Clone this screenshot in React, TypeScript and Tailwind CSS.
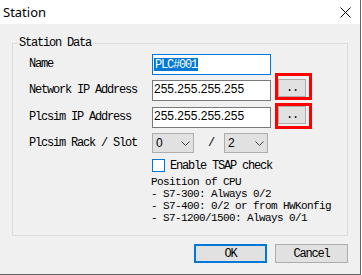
import React from "react";

const mono = "font-[family-name:'Liberation_Mono',monospace] text-[12px] tracking-[-1.2px] leading-[12px] text-black";
const monoSmall = "font-[family-name:'Liberation_Mono',monospace] text-[11px] tracking-[-0.6px] leading-[12px] text-black";
const sans = "font-[family-name:'Liberation_Sans',Arial,sans-serif] text-[12px] leading-[14px] text-black";

function Chevron() {
  return (
    <svg width="9" height="5" viewBox="0 0 9 5" className="shrink-0">
      <polyline points="0.5,0.5 4.5,4.5 8.5,0.5" fill="none" stroke="#444" strokeWidth="1" />
    </svg>
  );
}

function Combo({ value, w }: { value: string; w: string }) {
  return (
    <div className={`${w} h-[20px] bg-[#e1e1e1] border border-[#adadad] flex items-center justify-between pl-[3px] pr-[3px]`}>
      <span className={sans}>{value}</span>
      <Chevron />
    </div>
  );
}

export default function App() {
  return (
    <div className="w-[362px] h-[275px] bg-white">
      <div className="w-[361px] h-[275px] flex flex-col border-r border-b border-[#646464] bg-[#f0f0f0]">
        <div className="h-[24px] shrink-0 bg-white flex items-center justify-between pl-[3px] pr-[9px]">
          <span className="font-[family-name:'Noto_Sans',sans-serif] text-[13px] leading-[16px] text-black">Station</span>
          <svg width="11" height="11" viewBox="0 0 11 11">
            <path d="M0.5 0.5 L10.5 10.5 M10.5 0.5 L0.5 10.5" stroke="#000" strokeWidth="1" fill="none" />
          </svg>
        </div>
        <div className="flex-1 flex flex-col px-[12px] pt-[13px]">
          <fieldset className="h-[199px] border border-[#dcdcdc] p-0 m-0 min-w-0">
            <legend className={`${mono} ml-[5px] px-[1px]`}>Station Data</legend>
            <div className="flex flex-col pl-[16px] pt-[5px]">
              <div className="flex items-start h-[21px]">
                <div className={`${mono} w-[123px] h-[19px] flex items-center`}>Name</div>
                <div className="w-[119px] h-[21px] bg-white border border-[#0078d7] flex items-center pl-[1px]">
                  <span className={`${mono} bg-[#0078d7] text-white h-[13px] px-[1px] flex items-center`}>PLC#001</span>
                </div>
              </div>
              <div className="flex items-start h-[21px] mt-[5px]">
                <div className={`${mono} w-[123px] h-[19px] flex items-center`}>Network IP Address</div>
                <div className="w-[119px] h-[21px] bg-white border border-[#7a7a7a] flex items-center pl-[1px] pb-[3px]">
                  <span className={sans}>255.255.255.255</span>
                </div>
                <div className="ml-[4px] -mt-[7px] w-[37px] h-[27px] border-[3px] border-[#ff0000] flex items-end">
                  <div className={`${mono} w-[28px] h-[18px] bg-[#e1e1e1] border border-[#adadad] flex items-center justify-center`}>..</div>
                </div>
              </div>
              <div className="flex items-start h-[21px] mt-[6px]">
                <div className={`${mono} w-[123px] h-[19px] flex items-center`}>Plcsim IP Address</div>
                <div className="w-[119px] h-[21px] bg-white border border-[#7a7a7a] flex items-center pl-[1px] pb-[3px]">
                  <span className={sans}>255.255.255.255</span>
                </div>
                <div className="ml-[4px] -mt-[4px] w-[37px] h-[26px] border-[3px] border-[#ff0000] flex items-start">
                  <div className={`${mono} w-[28px] h-[18px] bg-[#e1e1e1] border border-[#adadad] flex items-center justify-center`}>..</div>
                </div>
              </div>
              <div className="flex items-center h-[20px] mt-[5px]">
                <div className={`${mono} w-[123px]`}>Plcsim Rack / Slot</div>
                <Combo value="0" w="w-[42px]" />
                <span className={`${mono} ml-[14px] w-[6px]`}>/</span>
                <div className="ml-[10px]">
                  <Combo value="2" w="w-[44px]" />
                </div>
              </div>
              <div className="flex items-center h-[13px] mt-[6px] ml-[123px]">
                <div className="w-[13px] h-[13px] bg-white border border-[#0078d7]" />
                <span className={`${mono} ml-[5px]`}>Enable TSAP check</span>
              </div>
              <div className={`${monoSmall} ml-[122px] mt-[4px] flex flex-col`}>
                <span className="h-[12px]">Position of CPU</span>
                <span className="h-[12px]">- S7-300: Always 0/2</span>
                <span className="h-[12px]">- S7-400: 0/2 or from HWKonfig</span>
                <span className="h-[12px]">- S7-1200/1500: Always 0/1</span>
              </div>
            </div>
          </fieldset>
          <div className="flex justify-end gap-[8px] mt-[8px]">
            <div className={`${mono} w-[73px] h-[19px] bg-[#e1e1e1] border-2 border-[#0078d7] flex items-center justify-center`}>OK</div>
            <div className={`${mono} w-[73px] h-[19px] bg-[#e1e1e1] border border-[#adadad] flex items-center justify-center`}>Cancel</div>
          </div>
        </div>
      </div>
    </div>
  );
}
